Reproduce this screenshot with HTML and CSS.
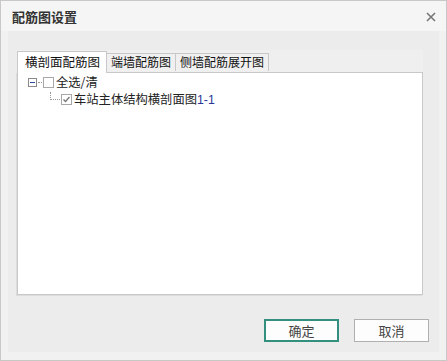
FILE: index.html
```html
<!DOCTYPE html>
<html lang="zh-CN">
<head>
    <meta charset="UTF-8">
    <title>配筋图设置</title>
    <link rel="stylesheet" href="styles.css">
</head>
<body>
    <div class="dialog">
        <div class="titlebar">
            <span class="title">配筋图设置</span>
            <span class="close">
                <svg width="10" height="10" viewBox="0 0 10 10"><path d="M1 1L9 9M9 1L1 9" stroke="#777" stroke-width="1.6"/></svg>
            </span>
        </div>
        <div class="content">
            <div class="tabctl">
                <div class="tabs">
                    <div class="tab active">横剖面配筋图</div>
                    <div class="tab">端墙配筋图</div>
                    <div class="tab">侧墙配筋展开图</div>
                </div>
                <div class="panel">
                    <div class="row">
                        <span class="expander"><svg width="9" height="9" viewBox="0 0 9 9"><rect x="0.5" y="0.5" width="8" height="8" fill="#fff" stroke="#8a8a8a"/><path d="M2 4.5H7" stroke="#2a4a9a"/></svg></span>
                        <span class="hdots"></span>
                        <span class="check"></span>
                        <span class="label">全选/清</span>
                    </div>
                    <div class="row child">
                        <span class="elbow"></span>
                        <span class="check checked"><svg width="11" height="11" viewBox="0 0 11 11"><path d="M2.5 5.5L4.5 7.5L8.5 3" fill="none" stroke="#777" stroke-width="1.3"/></svg></span>
                        <span class="label">车站主体结构横剖面图<span class="num">1-1</span></span>
                    </div>
                </div>
            </div>
            <div class="footer">
                <button class="btn primary">确定</button>
                <button class="btn">取消</button>
            </div>
        </div>
    </div>
</body>
</html>
```

FILE: styles.css
```css
* {
    box-sizing: border-box;
}

body {
    margin: 0;
    font-family: "Noto Sans CJK SC", "Liberation Sans", sans-serif;
    font-size: 12px;
    color: #222;
}

.dialog {
    width: 447px;
    height: 361px;
    border: 1px solid #c8c8c8;
    background-color: #f1f1f1;
    display: flex;
    flex-direction: column;
}

.titlebar {
    height: 30px;
    display: flex;
    align-items: center;
    justify-content: space-between;
    padding: 0 10px 0 11px;
    background-color: #f5f5f5;
}

.title {
    font-size: 13px;
    font-weight: bold;
    color: #333;
}

.close {
    display: flex;
    margin-top: 2px;
}

.content {
    margin: 0 7px 0 7px;
    height: 321px;
    background-color: #ececec;
    padding: 19px 0 0 9px;
}

.tabctl {
    margin-right: 16px;
    background-color: #efefef;
}

.tabs {
    display: flex;
    align-items: flex-end;
    height: 22px;
}

.tab {
    height: 18px;
    line-height: 16px;
    padding: 0 4px;
    border: 1px solid #c8c8c8;
    border-left: none;
    border-bottom: none;
    background-color: #f0f0f0;
    color: #111;
    font-size: 12px;
    margin-bottom: 1px;
}

.tab.active {
    height: 22px;
    line-height: 20px;
    padding: 0 6px 0 7px;
    border-left: 1px solid #c8c8c8;
    background-color: #fff;
    margin-bottom: -1px;
    position: relative;
    z-index: 1;
    font-size: 12.5px;
}

.panel {
    height: 223px;
    background-color: #fff;
    border: 1px solid #c8c8c8;
    box-shadow: -1px 1px 0 #dcdcdc;
    padding: 1px 0 0 10px;
}

.row {
    display: flex;
    align-items: center;
    height: 17px;
}

.expander {
    display: flex;
    width: 9px;
}

.hdots {
    width: 4px;
    margin: 0 1px;
    border-top: 1px dotted #999;
}

.check {
    width: 11px;
    height: 11px;
    border: 1px solid #a8a8a8;
    background-color: #fff;
    display: flex;
    margin-right: 2px;
}

.check svg {
    margin: -1px;
}

.label {
    line-height: 17px;
    font-size: 12.3px;
}

.row.child {
    padding-left: 22px;
}

.elbow {
    width: 10px;
    height: 8px;
    margin-top: -8px;
    border-left: 1px dotted #999;
    border-bottom: 1px dotted #999;
    margin-right: 1px;
}

.num {
    color: #2d3596;
    font-family: "Liberation Sans", sans-serif;
}

.footer {
    display: flex;
    justify-content: flex-end;
    gap: 15px;
    padding: 24px 10px 0 0;
}

.btn {
    width: 75px;
    height: 23px;
    background-color: #fdfdfd;
    border: 1px solid #b0b0b0;
    font-family: "Noto Sans CJK SC", sans-serif;
    font-size: 13px;
    color: #444;
    padding: 0;
    line-height: 19px;
}

.btn.primary {
    border: 2px solid #338f7e;
}
```
